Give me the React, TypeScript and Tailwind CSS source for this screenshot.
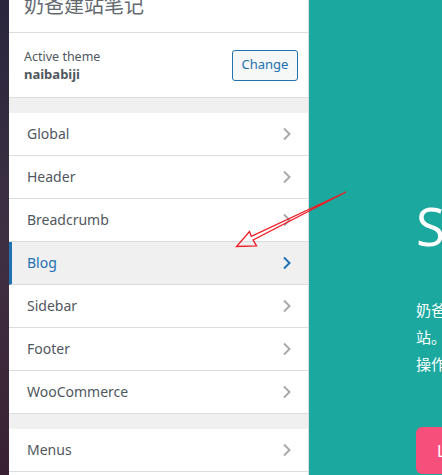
import React from "react";

const font = { fontFamily: '"Noto Sans", "Open Sans", "Noto Sans CJK SC", sans-serif' };

function Chevron({ active }: { active?: boolean }) {
  return (
    <svg width="10" height="14" viewBox="0 0 10 14" className="shrink-0">
      <path
        d="M2 1.5 L7.5 7 L2 12.5"
        fill="none"
        stroke={active ? "#2271b1" : "#a7aaad"}
        strokeWidth="2"
      />
    </svg>
  );
}

function Row({ label, active }: { label: string; active?: boolean }) {
  return (
    <div
      className={
        "h-[43px] shrink-0 flex items-center justify-between border-b border-[#dcdcde] pr-[16px] " +
        (active
          ? "bg-[#f0f0f1] border-l-[3px] border-l-[#2271b1] pl-[15px] text-[#2271b1]"
          : "bg-white pl-[18px] text-[#50575e]")
      }
    >
      <span className="text-[14px] leading-none">{label}</span>
      <Chevron active={active} />
    </div>
  );
}

export default function App() {
  return (
    <div className="relative w-[442px] h-[475px] flex overflow-hidden" style={font}>
      <div className="w-[9px] shrink-0 bg-gradient-to-b from-[#29263d] via-[#3e3043] to-[#3a2131]" />
      <div className="w-[300px] shrink-0 bg-white border-r border-[#dcdcde] flex flex-col overflow-hidden">
        <div className="h-[33px] shrink-0 border-b border-[#dcdcde] overflow-hidden pl-[15px]">
          <div className="text-[20px] leading-[20px] text-[#646970] mt-[-5px]" style={{ fontFamily: '"Noto Sans CJK SC", sans-serif' }}>
            奶爸建站笔记
          </div>
        </div>
        <div className="h-[65px] shrink-0 border-b border-[#dcdcde] flex items-center justify-between pl-[15px] pr-[10px]">
          <div className="flex flex-col">
            <span className="text-[12.5px] leading-[17px] text-[#50575e]">Active theme</span>
            <span className="text-[13px] leading-[18px] font-bold text-[#50575e]">naibabiji</span>
          </div>
          <div className="w-[66px] h-[31px] border border-[#2271b1] rounded-[3px] bg-[#f6f7f7] text-[#2271b1] text-[13px] flex items-center justify-center">
            Change
          </div>
        </div>
        <div className="h-[15px] shrink-0 bg-[#f0f0f1]" />
        <Row label="Global" />
        <Row label="Header" />
        <Row label="Breadcrumb" />
        <Row label="Blog" active />
        <Row label="Sidebar" />
        <Row label="Footer" />
        <Row label="WooCommerce" />
        <div className="h-[15px] shrink-0 bg-[#f0f0f1]" />
        <Row label="Menus" />
        <div className="flex-1 bg-white" />
      </div>
      <div className="flex-1 bg-[#1ba99f] pl-[107px] overflow-hidden flex flex-col text-white whitespace-nowrap">
        <div className="mt-[199px] text-[53px] leading-[53px]" style={{ fontFamily: '"Open Sans", "Noto Sans", sans-serif' }}>S</div>
        <div className="mt-[44px] text-[15px] leading-[27px]" style={{ fontFamily: '"Noto Sans CJK SC", sans-serif' }}>
          <div>奶爸建站笔记</div>
          <div>站。</div>
          <div>操作指南</div>
        </div>
        <div className="mt-[50px] w-[120px] h-[47px] shrink-0 rounded-[6px] bg-[#f74f7b] flex items-center pl-[21px] text-[16px]">
          Learn
        </div>
      </div>
      <svg className="absolute left-0 top-0 pointer-events-none" width="442" height="475">
        <polygon
          points="346,192 253.1,239.9 256.5,246 236.5,246.5 249.5,231.5 251.3,236.3"
          fill="none"
          stroke="#ee1c25"
          strokeWidth="1.3"
          strokeLinejoin="miter"
        />
      </svg>
    </div>
  );
}
